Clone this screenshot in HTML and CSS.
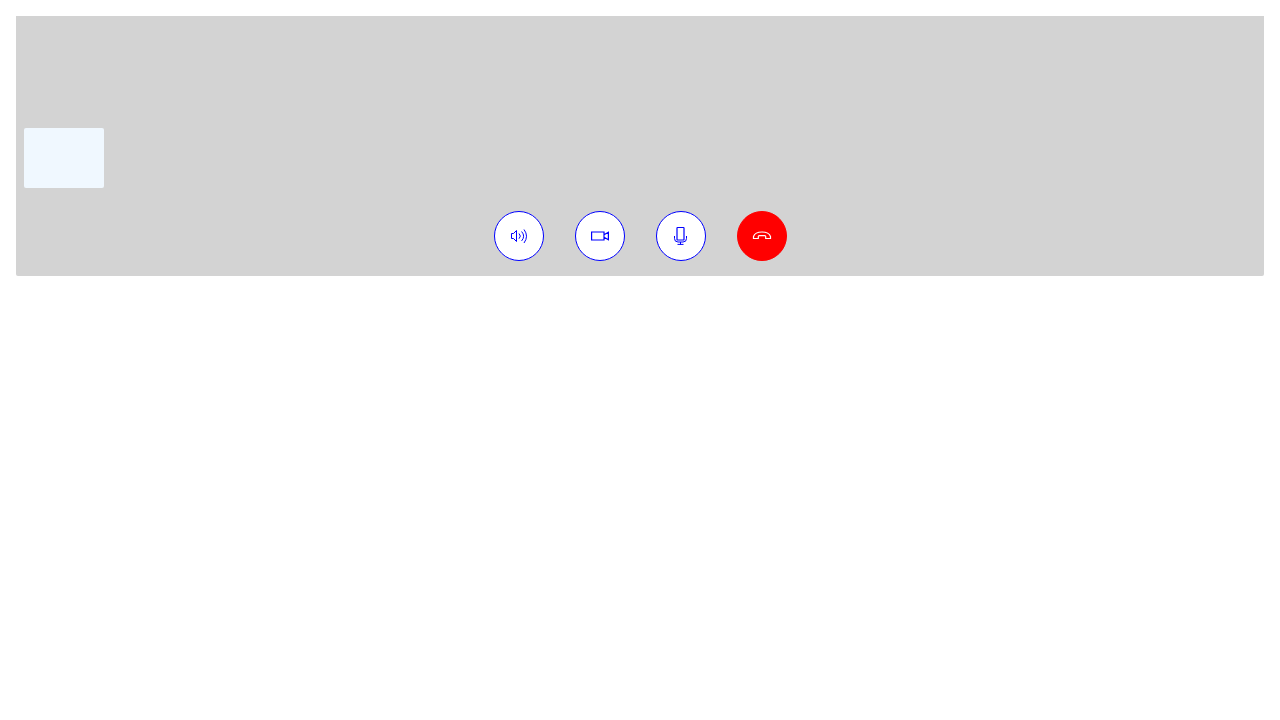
FILE: index.html
```
<!DOCTYPE html>
<html lang="en">
<head>
<meta charset="utf-8">
<meta name="viewport" content="width=device-width, initial-scale=1">
<title>Call</title>
<link rel="stylesheet" href="styles.css">
</head>
<body>
<main class="call">
  <div class="self-view"></div>
  <div class="controls">
    <button class="control" type="button" aria-label="Speaker">
      <svg class="icon" viewBox="0 0 20 20" aria-hidden="true"><path d="M2.500 7.500H4.500L7.500 4.500V15.500L4.500 12.500H2.500Z"/><path d="M10 7.500Q12.700 10.100 10 12.700M12.600 5.500Q16.700 10.200 12.600 14.900M15 3.500Q20 10.200 15 17"/></svg>
    </button>
    <button class="control" type="button" aria-label="Camera">
      <svg class="icon" viewBox="0 0 20 20" aria-hidden="true"><path stroke-width="1.200" d="M1.600 6H14V14H1.600ZM14 8.800L18.400 6.200V13.800L14 11.200"/></svg>
    </button>
    <button class="control" type="button" aria-label="Microphone">
      <svg class="icon" viewBox="0 0 20 20" aria-hidden="true"><rect x="6" y="1.500" width="7" height="12.500" rx="0.600" stroke-width="1.200"/><path d="M3.500 10V12.500Q3.500 16 7 16H12Q15.500 16 15.500 12.500V10M9.500 16V18.500M6.500 18.400H12.500"/></svg>
    </button>
    <button class="control control-end" type="button" aria-label="Hang up">
      <svg class="icon" viewBox="0 0 20 20" aria-hidden="true"><path stroke-width="1.200" d="M1.500 12.500V10.500C2.500 7.500 5.500 6 10 6S17.500 7.500 18.500 10.500V12.500H13.700V10.500Q13.700 9.600 12.700 9.600H7.300Q6.300 9.600 6.300 10.500V12.500Z"/></svg>
    </button>
  </div>
</main>
</body>
</html>
```
FILE: styles.css
```
body {
  margin: 0;
  padding: 16px;
  background: white;
  font-family: "Liberation Sans", sans-serif;
}

.call {
  box-sizing: border-box;
  display: flex;
  flex-direction: column;
  gap: 23px;
  padding: 112px 8px 15px;
  background: lightgray;
  border-radius: 0 0 2px 2px;
}

.self-view {
  width: 80px;
  height: 60px;
  border-radius: 2px;
  background: aliceblue;
}

.controls {
  display: flex;
  justify-content: center;
  gap: 31px;
}

.control {
  box-sizing: border-box;
  display: flex;
  align-items: center;
  justify-content: center;
  width: 50px;
  height: 50px;
  padding: 0;
  border: 1px solid blue;
  border-radius: 50%;
  background: white;
  color: blue;
  cursor: pointer;
}

.control-end {
  border-color: red;
  background: red;
  color: white;
}

.icon {
  display: block;
  width: 20px;
  height: 20px;
  fill: none;
  stroke: currentColor;
  stroke-width: 1;
}
```
